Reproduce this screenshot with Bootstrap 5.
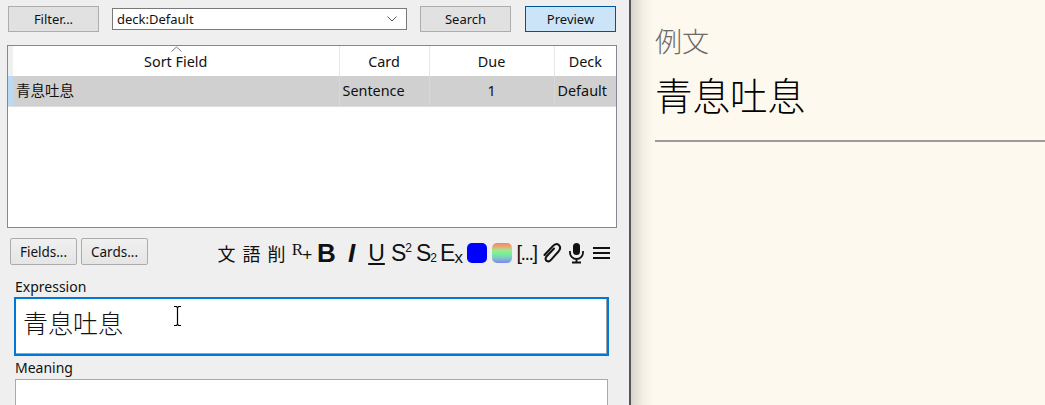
<!DOCTYPE html>
<html lang="ja">
<head>
    <meta charset="UTF-8">
    <title>Browse</title>
    <link href="https://cdn.jsdelivr.net/npm/bootstrap@5.3.3/dist/css/bootstrap.min.css" rel="stylesheet">
    <style>
        html, body {
            height: 405px;
            overflow: hidden;
        }
        body {
            background: #efefef;
            color: #111;
            font-family: "Noto Sans", "Noto Sans CJK JP", sans-serif;
            font-size: 14px;
        }
        .browse-pane {
            width: 631px;
            height: 405px;
            flex: none;
            border-right: 2px solid #55565a;
            padding: 6px 13px 0 7px;
            position: relative;
        }
        .top-bar {
            height: 26px;
            margin-left: 1px;
            gap: 13px;
        }
        .qt-btn {
            width: 91px;
            height: 26px;
            padding: 0;
            border: 1px solid #adadad;
            border-radius: 0;
            background: #e1e1e1;
            color: #111;
            font-size: 13px;
            line-height: 22px;
            --bs-btn-hover-bg: #e1e1e1;
        }
        .qt-btn-active {
            background: #cce4f7;
            border-color: #005499;
            margin-left: 1px;
        }
        .search-box {
            width: 295px;
            height: 22px;
            background: #fff;
            border: 1px solid #7a7a7a;
            padding: 0 9px 0 4px;
            font-size: 13px;
            line-height: 20px;
        }
        .card-grid {
            width: 610px;
            height: 183px;
            margin-top: 13px;
            background: #fff;
            border: 1px solid #828790;
            position: relative;
        }
        .card-grid table {
            table-layout: fixed;
            width: 608px;
            margin: 0;
            --bs-table-bg: transparent;
        }
        .card-grid th, .card-grid td {
            padding: 0;
            font-weight: 400;
            font-size: 14.4px;
            text-align: center;
            border: 0;
            border-right: 1px solid #e6e6e6;
            color: #111;
            white-space: nowrap;
            overflow: hidden;
        }
        .card-grid th {
            height: 30px;
            padding-top: 1px;
            vertical-align: middle;
        }
        .card-grid td {
            height: 30px;
            background: #d0d0d0;
            border-right-color: #d8d8d8;
            border-bottom: 1px solid #dedede;
            vertical-align: middle;
        }
        .card-grid .row-head { background: #b9d9f5; border-right: 0; }
        .card-grid th.row-head { background: #efefef; }
        .card-grid td.left-cell { text-align: left; padding-left: 3px; }
        .card-grid td.cjk-cell { font-size: 14.5px; padding-left: 3px; }
        .card-grid th:last-child, .card-grid td:last-child { border-right: 0; }
        .sort-arrow {
            position: absolute;
            left: 163px;
            top: 0;
        }
        .tool-bar {
            height: 28px;
            margin-top: 9px;
            padding: 0 2px 0 3px;
        }
        .small-btn {
            height: 27px;
            width: 67px;
            padding: 1px 0 0;
            border: 1px solid #acacac;
            border-radius: 2px;
            background: linear-gradient(#f0f0f0, #e5e5e5);
            color: #111;
            font-size: 13.5px;
            line-height: 24px;
        }
        .tool-icons { padding-top: 3px; }
        .tool-glyph {
            display: block;
            text-align: center;
            color: #111;
            line-height: 28px;
        }
        .glyph-kanji { width: 25px; font-size: 18px; font-family: "Noto Sans CJK TC", sans-serif; }
        .glyph-r { width: 25px; font-family: "Liberation Serif", serif; font-size: 17px; white-space: nowrap; letter-spacing: -1px; position: relative; top: -3px; }
        .glyph-r sub { font-family: "Liberation Sans", sans-serif; font-size: 17px; bottom: -.3em; font-weight: 300; }
        .glyph-b { width: 25px; font: 700 26px/28px "Liberation Sans", sans-serif; }
        .glyph-i { width: 25px; font: italic 700 26px/28px "Liberation Sans", sans-serif; }
        .glyph-u { width: 25px; font: 400 23px/28px "Liberation Sans", sans-serif; text-decoration: underline; text-underline-offset: 2px; }
        .glyph-s { width: 25px; font: 400 23px/28px "Liberation Sans", sans-serif; white-space: nowrap; letter-spacing: -1px; }
        .glyph-s sup, .glyph-s sub { font-size: 12px; letter-spacing: 0; }
        .glyph-s sup { top: -.75em; }
        .glyph-s sub { bottom: -.1em; }
        .glyph-x sub { font-size: 17px; bottom: -.15em; }
        .glyph-dots { width: 25px; font: 400 20px/28px "Liberation Sans", sans-serif; white-space: nowrap; letter-spacing: -1.6px; }
        .swatch {
            width: 20px;
            height: 20px;
            border-radius: 5px;
            margin: 0 2.5px;
        }
        .swatch-blue { background: #0000ff; }
        .swatch-rainbow { background: linear-gradient(#e98a6e, #f0a070 15%, #a6e58c 35%, #74f09a 55%, #7fc8c8 75%, #7f85ee); }
        .tool-svg { width: 25px; height: 24px; display: block; }
        .editor-wrap { padding: 0 2px 0 8px; }
        .field-label {
            height: 20px;
            margin-top: 12px;
            line-height: 20px;
            font-size: 14px;
        }
        .field-box {
            width: 593px;
            background: #fff;
            border: 1px solid #a9a9a9;
        }
        .field-focus {
            width: 595px;
            height: 59px;
            margin-left: -1px;
            border: 2px solid #0078d7;
            box-shadow: inset -1px -1px 0 #a0a0a0;
            padding: 7px 7px;
            font-size: 25px;
            line-height: 32px;
            font-family: "Noto Sans CJK JP", sans-serif;
            font-weight: 300;
        }
        .field-second { height: 40px; margin-top: 1px; }
        .field-next { margin-top: 2px; }
        .ibeam {
            position: absolute;
            left: 172px;
            top: 306px;
        }
        .preview-pane {
            flex: 1;
            height: 405px;
            background: linear-gradient(90deg, #d9d5cc, #f4efe5 12px, #fef9ee 22px);
            padding: 20px 0 0 24px;
            font-family: "Noto Sans CJK JP", sans-serif;
        }
        .ex-label {
            font-size: 27px;
            line-height: 42px;
            color: #6a6a6a;
            font-weight: 300;
        }
        .ex-word {
            font-size: 37.5px;
            line-height: 56px;
            margin-top: 4px;
            color: #000;
            font-weight: 300;
        }
        .ex-rule {
            margin: 18px 0 0;
            height: 2px;
            border: 0;
            background: #9c9c9c;
            opacity: 1;
        }
    </style>
</head>
<body>
<div class="d-flex">
    <div class="browse-pane">
        <div class="top-bar d-flex align-items-center">
            <button class="btn qt-btn" type="button">Filter...</button>
            <div class="search-box d-flex justify-content-between align-items-center">
                <span>deck:Default</span>
                <svg width="10" height="6" viewBox="0 0 10 6"><path d="M.5.5 5 5 9.5.5" fill="none" stroke="#555"/></svg>
            </div>
            <button class="btn qt-btn" type="button">Search</button>
            <button class="btn qt-btn qt-btn-active" type="button">Preview</button>
        </div>

        <div class="card-grid">
            <svg class="sort-arrow" width="11" height="6" viewBox="0 0 11 6"><path d="M.5 5.500 5.500 1l5 4.500" fill="none" stroke="#777"/></svg>
            <table class="table">
                <colgroup>
                    <col style="width:5px"><col style="width:326px"><col style="width:90px"><col style="width:125px"><col style="width:62px">
                </colgroup>
                <thead>
                    <tr><th class="row-head"></th><th>Sort Field</th><th>Card</th><th>Due</th><th>Deck</th></tr>
                </thead>
                <tbody>
                    <tr>
                        <td class="row-head"></td>
                        <td class="left-cell cjk-cell">青息吐息</td>
                        <td class="left-cell">Sentence</td>
                        <td>1</td>
                        <td class="left-cell">Default</td>
                    </tr>
                </tbody>
            </table>
        </div>

        <div class="tool-bar d-flex align-items-center">
            <button class="btn small-btn me-1" type="button">Fields...</button>
            <button class="btn small-btn" type="button">Cards...</button>
            <div class="tool-icons ms-auto d-flex align-items-center">
                <span class="tool-glyph glyph-kanji">文</span>
                <span class="tool-glyph glyph-kanji">語</span>
                <span class="tool-glyph glyph-kanji">削</span>
                <span class="tool-glyph glyph-r">R<sub>+</sub></span>
                <span class="tool-glyph glyph-b">B</span>
                <span class="tool-glyph glyph-i">I</span>
                <span class="tool-glyph glyph-u">U</span>
                <span class="tool-glyph glyph-s">S<sup>2</sup></span>
                <span class="tool-glyph glyph-s">S<sub>2</sub></span>
                <span class="tool-glyph glyph-s glyph-x">E<sub>x</sub></span>
                <span class="swatch swatch-blue"></span>
                <span class="swatch swatch-rainbow"></span>
                <span class="tool-glyph glyph-dots">[...]</span>
                <svg class="tool-svg" viewBox="0 0 25 24"><path d="M15 7.500 7.500 15.500c-1.500 1.800-1 3.500.2 4.300 1.300.9 3 .5 4.300-1L19.500 10.500c2-2.500 2-5 .3-6.500-1.800-1.500-4-1-6 1.200L5.500 14" fill="none" stroke="#111" stroke-width="2" stroke-linecap="round"/></svg>
                <svg class="tool-svg" viewBox="0 0 25 24"><rect x="9" y="2" width="7" height="12" rx="3.500" fill="#111"/><path d="M6 10v1.500a6.500 6.500 0 0 0 13 0V10M12.500 18v3.500M8 21.500h9" fill="none" stroke="#111" stroke-width="1.800"/></svg>
                <svg class="tool-svg" viewBox="0 0 25 24"><path d="M4 7h17M4 12h17M4 17h17" stroke="#111" stroke-width="2.200"/></svg>
            </div>
        </div>

        <div class="editor-wrap">
            <div class="field-label">Expression</div>
            <div class="field-box field-focus">青息吐息</div>
            <div class="field-label field-next">Meaning</div>
            <div class="field-box field-second"></div>
        </div>

        <svg class="ibeam" width="11" height="20" viewBox="0 0 11 20"><path d="M2 .5h2.500L5.500 2l1-1.500H9M5.500 2v16M2 19.500h2.500l1-1.500 1 1.500H9" fill="none" stroke="#000" stroke-width="1.200"/></svg>
    </div>

    <div class="preview-pane">
        <div class="ex-label">例文</div>
        <div class="ex-word">青息吐息</div>
        <hr class="ex-rule">
    </div>
</div>
<script src="https://cdn.jsdelivr.net/npm/bootstrap@5.3.3/dist/js/bootstrap.bundle.min.js"></script>
</body>
</html>
